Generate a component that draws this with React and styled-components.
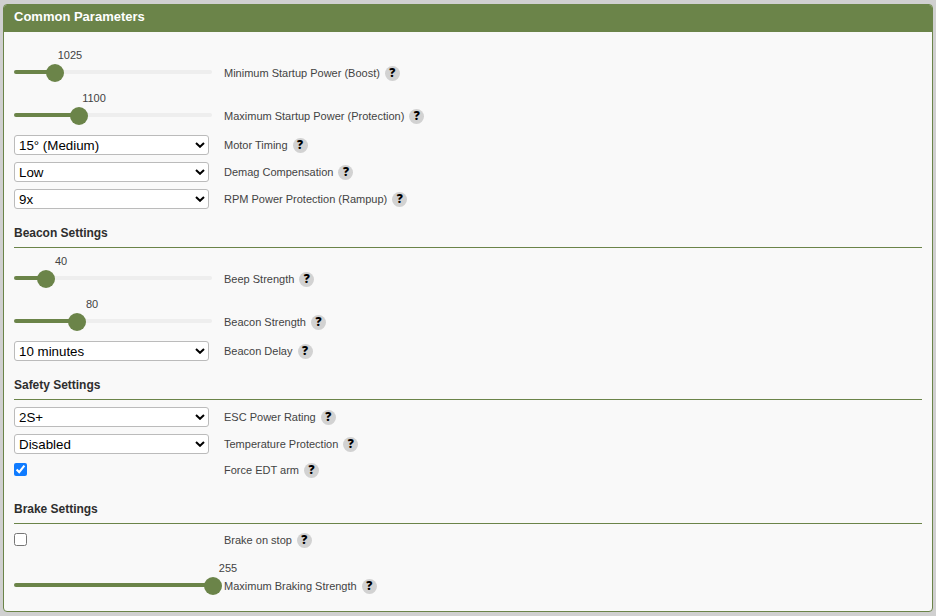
import React from "react";
import styled, { createGlobalStyle } from "styled-components";

const GREEN = "#6b8449";

const GlobalStyle = createGlobalStyle`
  * { box-sizing: border-box; }
  body { margin: 0; background: #d0d0d0; font-family: "Liberation Sans", Arial, sans-serif; }
`;

const Page = styled.main`
  height: 616px;
  padding: 4px 3px;
  overflow: hidden;
`;

const Panel = styled.section`
  height: 608px;
  border: 1px solid ${GREEN};
  border-radius: 4px;
  background: #f9f9f9;
  overflow: hidden;
`;

const PanelHeader = styled.header`
  height: 27px;
  padding: 0 10px;
  background: ${GREEN};
  color: #fff;
  font-size: 13px;
  font-weight: bold;
  line-height: 24px;
`;

const PanelBody = styled.div`
  padding: 14px 10px 9px;
`;

const SectionTitle = styled.h2`
  height: 35px;
  margin: 0 0 4px;
  padding-top: 13px;
  border-bottom: 1px solid ${GREEN};
  color: #2e2e2e;
  font-size: 12px;
  line-height: 14px;
  font-weight: bold;
  letter-spacing: -0.02px;
`;

const Row = styled.div`
  display: grid;
  grid-template-columns: 210px 1fr;
  height: ${(p) => p.$height}px;
`;

const Caption = styled.div`
  display: flex;
  align-items: center;
  gap: 5px;
  height: 15px;
  margin-top: ${(p) => p.$top}px;
  color: #434343;
  font-size: 11px;
  line-height: 15px;
  white-space: nowrap;
`;

const CaptionText = styled.span`
  flex: none;
`;

const Help = styled.span`
  width: 15px;
  height: 15px;
  border-radius: 50%;
  background: #d2d2d2;
  color: #000;
  font: 800 12px/14px "Open Sans", sans-serif;
  text-align: center;
`;

const SliderBox = styled.div`
  position: relative;
  width: 198px;
`;

const Track = styled.div`
  height: 4px;
  margin-top: 24px;
  border-radius: 2px;
  background: #eee;
`;

const Fill = styled.div`
  height: 4px;
  border-radius: 2px;
  background: ${GREEN};
`;

const Thumb = styled.div`
  position: absolute;
  top: 18px;
  width: 18px;
  height: 18px;
  margin-left: -9px;
  border-radius: 50%;
  background: ${GREEN};
`;

const Value = styled.output`
  position: absolute;
  top: 2px;
  width: 40px;
  margin-left: -5px;
  color: #434343;
  font-size: 11px;
  line-height: 14px;
  text-align: center;
`;

const SelectBox = styled.div`
  display: grid;
  width: 195px;
  height: 20px;
  margin-top: 3px;
  > * { grid-area: 1 / 1; }
`;

const Select = styled.select`
  appearance: none;
  width: 195px;
  height: 20px;
  margin: 0;
  padding: 0 20px 0 4px;
  border: 1px solid #bbb;
  border-radius: 3px;
  background: #fff;
  color: #000;
  font: 13.333px "Liberation Sans", Arial, sans-serif;
`;

const Arrow = styled.svg`
  width: 10px;
  height: 6px;
  justify-self: end;
  align-self: center;
  margin-right: 4px;
  pointer-events: none;
`;

const Checkbox = styled.input`
  width: 13px;
  height: 13px;
  margin: 5px 0 0;
  accent-color: #0f7bff;
`;

const Label = ({ text, top }) => (
  <Caption $top={top}>
    <CaptionText>{text}</CaptionText>
    <Help>?</Help>
  </Caption>
);

const SliderRow = ({ label, value, at }) => (
  <Row $height={43}>
    <SliderBox>
      <Track><Fill style={{ width: Math.min(at, 198) }} /></Track>
      <Thumb style={{ left: at }} />
      <Value style={{ left: at }}>{value}</Value>
    </SliderBox>
    <Label text={label} top={20} />
  </Row>
);

const SelectRow = ({ label, value }) => (
  <Row $height={27}>
    <SelectBox>
      <Select defaultValue={value}><option>{value}</option></Select>
      <Arrow viewBox="0 0 10 6"><path d="M1 1 5 4.8 9 1" fill="none" stroke="#000" strokeWidth="2" /></Arrow>
    </SelectBox>
    <Label text={label} top={6} />
  </Row>
);

const CheckRow = ({ label, checked }) => (
  <Row $height={31}>
    <Checkbox type="checkbox" defaultChecked={checked} />
    <Label text={label} top={5} />
  </Row>
);

export default function App() {
  return (
    <Page>
      <GlobalStyle />
      <Panel>
        <PanelHeader>Common Parameters</PanelHeader>
        <PanelBody>
          <SliderRow label="Minimum Startup Power (Boost)" value={1025} at={41} />
          <SliderRow label="Maximum Startup Power (Protection)" value={1100} at={65} />
          <SelectRow label="Motor Timing" value="15° (Medium)" />
          <SelectRow label="Demag Compensation" value="Low" />
          <SelectRow label="RPM Power Protection (Rampup)" value="9x" />
          <SectionTitle>Beacon Settings</SectionTitle>
          <SliderRow label="Beep Strength" value={40} at={32} />
          <SliderRow label="Beacon Strength" value={80} at={63} />
          <SelectRow label="Beacon Delay" value="10 minutes" />
          <SectionTitle>Safety Settings</SectionTitle>
          <SelectRow label="ESC Power Rating" value="2S+" />
          <SelectRow label="Temperature Protection" value="Disabled" />
          <CheckRow label="Force EDT arm" checked />
          <SectionTitle>Brake Settings</SectionTitle>
          <CheckRow label="Brake on stop" />
          <SliderRow label="Maximum Braking Strength" value={255} at={199} />
        </PanelBody>
      </Panel>
    </Page>
  );
}
